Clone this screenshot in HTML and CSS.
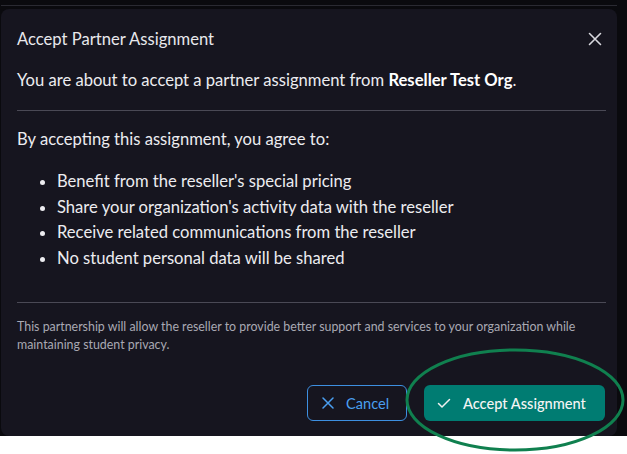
FILE: index.html
```html
<!DOCTYPE html>
<html>
<head>
<meta charset="utf-8">
<link rel="stylesheet" href="styles.css">
</head>
<body>
<div class="screen">
  <div class="topline"></div>
  <div class="modal">
    <div class="modal-header">
      <h2 class="title">Accept Partner Assignment</h2>
      <button class="close" aria-label="Close">
        <svg width="14" height="14" viewBox="0 0 14 14"><path d="M1.5 1.5 L12.5 12.5 M12.5 1.5 L1.5 12.5" stroke="#d8d8de" stroke-width="1.6" fill="none" stroke-linecap="round"/></svg>
      </button>
    </div>
    <div class="modal-body">
      <p class="intro">You are about to accept a partner assignment from <strong>Reseller Test Org</strong>.</p>
      <hr class="divider">
      <p class="agree">By accepting this assignment, you agree to:</p>
      <ul class="terms">
        <li>Benefit from the reseller's special pricing</li>
        <li>Share your organization's activity data with the reseller</li>
        <li>Receive related communications from the reseller</li>
        <li>No student personal data will be shared</li>
      </ul>
      <hr class="divider divider-lower">
      <p class="note">This partnership will allow the reseller to provide better support and services to your organization while maintaining student privacy.</p>
    </div>
    <div class="modal-footer">
      <button class="btn btn-cancel">
        <svg width="12" height="12" viewBox="0 0 12 12"><path d="M1 1 L11 11 M11 1 L1 11" stroke="#4a9ff0" stroke-width="1.5" fill="none" stroke-linecap="round"/></svg>
        <span>Cancel</span>
      </button>
      <button class="btn btn-accept">
        <svg width="14" height="12" viewBox="0 0 14 12"><path d="M1.5 6.5 L5 10 L12.5 2.5" stroke="#f0f0f0" stroke-width="1.5" fill="none" stroke-linecap="round" stroke-linejoin="round"/></svg>
        <span>Accept Assignment</span>
      </button>
    </div>
  </div>
</div>
<svg class="annotation" width="627" height="454" viewBox="0 0 627 454"><ellipse cx="515" cy="400" rx="108" ry="50" fill="none" stroke="#10804f" stroke-width="3"/></svg>
</body>
</html>
```
FILE: styles.css
```css
* { box-sizing: border-box; }
html, body { margin: 0; padding: 0; }
body {
  background: #ffffff;
  width: 627px;
  height: 454px;
  overflow: hidden;
  position: relative;
  font-family: "Lato", "Noto Sans", sans-serif;
}
.screen {
  background: #0a0a0e;
  height: 436px;
  padding: 5px 10px 0 1px;
  display: flex;
  flex-direction: column;
}
.topline {
  height: 1px;
  background: #2a2a32;
  margin: 0 0 3px 0;
}
.modal {
  flex: 1;
  background: #16151f;
  border-radius: 8px;
  display: flex;
  flex-direction: column;
  color: #ececf0;
}
.modal-header {
  display: flex;
  align-items: center;
  justify-content: space-between;
  padding: 19px 15px 0 16px;
  height: 40px;
}
.title {
  margin: 0;
  font-size: 16.6px;
  font-weight: 400;
  color: #e8e8ec;
}
.close {
  background: none;
  border: none;
  padding: 0;
  width: 14px;
  height: 14px;
  display: flex;
}
.modal-body {
  padding: 0 11px 0 16px;
}
.intro {
  margin: 21px 0 0 0;
  font-size: 16.6px;
  line-height: 20px;
}
.intro strong { font-weight: 700; color: #ffffff; }
.divider {
  border: none;
  height: 1px;
  background: #4a4955;
  margin: 20px 0 0 0;
}
.divider-lower { margin-top: 31px; }
.agree {
  margin: 18px 0 0 0;
  font-size: 16.6px;
  line-height: 20px;
}
.terms {
  margin: 20px 0 0 0;
  padding-left: 40px;
  font-size: 16.6px;
  line-height: 25.6px;
}
.note {
  margin: 15px 0 0 0;
  font-size: 12.4px;
  line-height: 18px;
  color: #a9a9b3;
}
.modal-footer {
  display: flex;
  justify-content: flex-end;
  gap: 17px;
  padding: 31px 12px 0 0;
}
.btn {
  height: 36px;
  border-radius: 6px;
  font-family: inherit;
  font-size: 14.6px;
  display: flex;
  align-items: center;
  gap: 12px;
}
.btn-cancel {
  width: 100px;
  background: transparent;
  border: 1px solid #3d8fe0;
  color: #4a9ff0;
  padding: 0 0 0 14px;
}
.btn-accept {
  width: 181px;
  background: #007c72;
  border: none;
  color: #f4f4f4;
  padding: 0 0 0 13px;
  gap: 12px;
  font-weight: 500;
}
.annotation {
  position: absolute;
  left: 0;
  top: 0;
  pointer-events: none;
}
```
